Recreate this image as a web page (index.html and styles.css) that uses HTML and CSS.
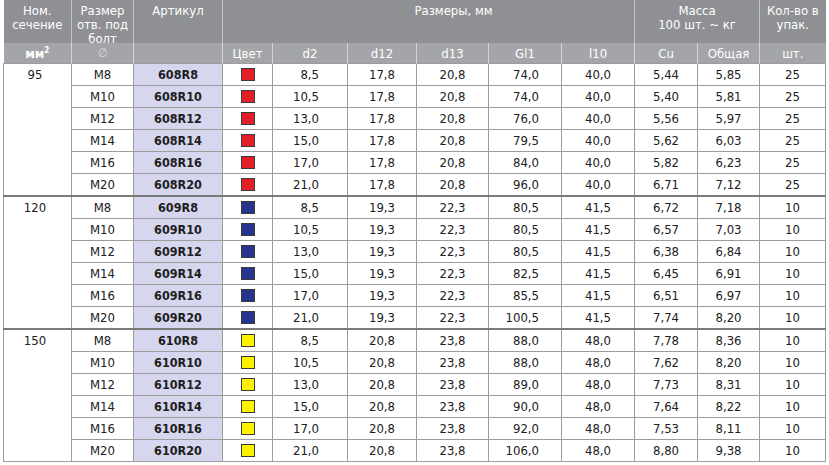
FILE: index.html
```html
<!DOCTYPE html>
<html lang="ru">
<head>
<meta charset="utf-8">
<title>Таблица</title>
<link rel="stylesheet" href="styles.css">
</head>
<body>
<table class="spec">
  <colgroup>
    <col class="c-nom"><col class="c-size"><col class="c-art"><col class="c-col">
    <col class="c-d2"><col class="c-d12"><col class="c-d13"><col class="c-gl1"><col class="c-l10">
    <col class="c-cu"><col class="c-tot"><col class="c-qty">
  </colgroup>
  <thead>
    <tr class="h1">
      <th><div class="clip">Ном.<br>сечение</div></th>
      <th><div class="clip">Размер<br>отв. под<br>болт</div></th>
      <th><div class="clip">Артикул</div></th>
      <th colspan="6" class="dims"><div class="clip">Размеры, мм</div></th>
      <th colspan="2"><div class="clip">Масса<br>100 шт. ~ кг</div></th>
      <th><div class="clip">Кол-во в<br>упак.</div></th>
    </tr>
    <tr class="h2">
      <th class="bold">мм<sup>2</sup></th>
      <th class="dia">∅</th>
      <th></th>
      <th>Цвет</th>
      <th>d2</th>
      <th>d12</th>
      <th>d13</th>
      <th>Gl1</th>
      <th>l10</th>
      <th>Cu</th>
      <th>Общая</th>
      <th>шт.</th>
    </tr>
  </thead>
  <tbody>
    <tr><td class="nom" rowspan="6">95</td><td>M8</td><td class="art">608R8</td><td><span class="sw red"></span></td><td>8,5</td><td>17,8</td><td>20,8</td><td>74,0</td><td>40,0</td><td>5,44</td><td>5,85</td><td>25</td></tr>
    <tr><td>M10</td><td class="art">608R10</td><td><span class="sw red"></span></td><td>10,5</td><td>17,8</td><td>20,8</td><td>74,0</td><td>40,0</td><td>5,40</td><td>5,81</td><td>25</td></tr>
    <tr><td>M12</td><td class="art">608R12</td><td><span class="sw red"></span></td><td>13,0</td><td>17,8</td><td>20,8</td><td>76,0</td><td>40,0</td><td>5,56</td><td>5,97</td><td>25</td></tr>
    <tr><td>M14</td><td class="art">608R14</td><td><span class="sw red"></span></td><td>15,0</td><td>17,8</td><td>20,8</td><td>79,5</td><td>40,0</td><td>5,62</td><td>6,03</td><td>25</td></tr>
    <tr><td>M16</td><td class="art">608R16</td><td><span class="sw red"></span></td><td>17,0</td><td>17,8</td><td>20,8</td><td>84,0</td><td>40,0</td><td>5,82</td><td>6,23</td><td>25</td></tr>
    <tr><td>M20</td><td class="art">608R20</td><td><span class="sw red"></span></td><td>21,0</td><td>17,8</td><td>20,8</td><td>96,0</td><td>40,0</td><td>6,71</td><td>7,12</td><td>25</td></tr>
  </tbody>
  <tbody>
    <tr><td class="nom" rowspan="6">120</td><td>M8</td><td class="art">609R8</td><td><span class="sw blue"></span></td><td>8,5</td><td>19,3</td><td>22,3</td><td>80,5</td><td>41,5</td><td>6,72</td><td>7,18</td><td>10</td></tr>
    <tr><td>M10</td><td class="art">609R10</td><td><span class="sw blue"></span></td><td>10,5</td><td>19,3</td><td>22,3</td><td>80,5</td><td>41,5</td><td>6,57</td><td>7,03</td><td>10</td></tr>
    <tr><td>M12</td><td class="art">609R12</td><td><span class="sw blue"></span></td><td>13,0</td><td>19,3</td><td>22,3</td><td>80,5</td><td>41,5</td><td>6,38</td><td>6,84</td><td>10</td></tr>
    <tr><td>M14</td><td class="art">609R14</td><td><span class="sw blue"></span></td><td>15,0</td><td>19,3</td><td>22,3</td><td>82,5</td><td>41,5</td><td>6,45</td><td>6,91</td><td>10</td></tr>
    <tr><td>M16</td><td class="art">609R16</td><td><span class="sw blue"></span></td><td>17,0</td><td>19,3</td><td>22,3</td><td>85,5</td><td>41,5</td><td>6,51</td><td>6,97</td><td>10</td></tr>
    <tr><td>M20</td><td class="art">609R20</td><td><span class="sw blue"></span></td><td>21,0</td><td>19,3</td><td>22,3</td><td>100,5</td><td>41,5</td><td>7,74</td><td>8,20</td><td>10</td></tr>
  </tbody>
  <tbody>
    <tr><td class="nom" rowspan="6">150</td><td>M8</td><td class="art">610R8</td><td><span class="sw yellow"></span></td><td>8,5</td><td>20,8</td><td>23,8</td><td>88,0</td><td>48,0</td><td>7,78</td><td>8,36</td><td>10</td></tr>
    <tr><td>M10</td><td class="art">610R10</td><td><span class="sw yellow"></span></td><td>10,5</td><td>20,8</td><td>23,8</td><td>88,0</td><td>48,0</td><td>7,62</td><td>8,20</td><td>10</td></tr>
    <tr><td>M12</td><td class="art">610R12</td><td><span class="sw yellow"></span></td><td>13,0</td><td>20,8</td><td>23,8</td><td>89,0</td><td>48,0</td><td>7,73</td><td>8,31</td><td>10</td></tr>
    <tr><td>M14</td><td class="art">610R14</td><td><span class="sw yellow"></span></td><td>15,0</td><td>20,8</td><td>23,8</td><td>90,0</td><td>48,0</td><td>7,64</td><td>8,22</td><td>10</td></tr>
    <tr><td>M16</td><td class="art">610R16</td><td><span class="sw yellow"></span></td><td>17,0</td><td>20,8</td><td>23,8</td><td>92,0</td><td>48,0</td><td>7,53</td><td>8,11</td><td>10</td></tr>
    <tr><td>M20</td><td class="art">610R20</td><td><span class="sw yellow"></span></td><td>21,0</td><td>20,8</td><td>23,8</td><td>106,0</td><td>48,0</td><td>8,80</td><td>9,38</td><td>10</td></tr>
  </tbody>
</table>
</body>
</html>
```
FILE: styles.css
```css
html, body {
  margin: 0;
  padding: 0;
  background: #ffffff;
}

.spec {
  margin: 0 0 0 3px;
  width: 822px;
  table-layout: fixed;
  border-collapse: collapse;
  font-family: "DejaVu Sans Condensed", "Liberation Sans", sans-serif;
  font-size: 13px;
  color: #202020;
}

.c-nom { width: 68px; }
.c-size { width: 62px; }
.c-art { width: 89px; }
.c-col { width: 50px; }
.c-d2 { width: 75px; }
.c-d12 { width: 69px; }
.c-d13 { width: 72px; }
.c-gl1 { width: 73px; }
.c-l10 { width: 73px; }
.c-cu { width: 63px; }
.c-tot { width: 62px; }
.c-qty { width: 66px; }

.spec th {
  color: #ffffff;
  font-weight: normal;
  padding: 0;
  text-align: center;
}

.h1 th {
  background: #8e9093;
  height: 43px;
  vertical-align: top;
  border-left: 1px solid #c4c5c7;
  font-size: 13px;
  line-height: 14px;
}

.h1 th:first-child { border-left: none; }

.h1 .clip {
  height: 39px;
  padding-top: 4px;
  overflow: hidden;
}

.h1 .dims .clip { padding-left: 50px; }

.h2 th {
  background: #a3a5a8;
  height: 20px;
  border-left: 1px solid #d2d3d5;
  font-size: 13px;
  vertical-align: middle;
}

.h2 th:first-child { border-left: none; }

.h2 .bold { font-weight: bold; }
.h2 sup { font-size: 8px; vertical-align: 5px; line-height: 0; }
.h2 .dia { color: #d8d9db; font-size: 12px; }

.spec td {
  height: 21px;
  padding: 0;
  border: 1px solid #9c9c9c;
  text-align: center;
  vertical-align: middle;
}

.spec tbody + tbody tr:first-child td {
  border-top: 2px solid #7a7a7a;
}

.spec td.nom {
  vertical-align: top;
  padding-top: 3px;
  padding-right: 5px;
}

.spec td.art {
  background: #d6d6ee;
  font-weight: bold;
  font-size: 12.5px;
  color: #1e1e1e;
}

.spec td:nth-last-child(8) { text-align: right; padding-right: 28px; }
.spec td:nth-last-child(5) { text-align: right; padding-right: 22px; }

.sw {
  display: inline-block;
  width: 12px;
  height: 11px;
  border: 1px solid #3a3a3a;
  vertical-align: middle;
  margin-top: -2px;
}

.sw.red { background: #e3202a; }
.sw.blue { background: #27348f; }
.sw.yellow { background: #fff200; }
```
